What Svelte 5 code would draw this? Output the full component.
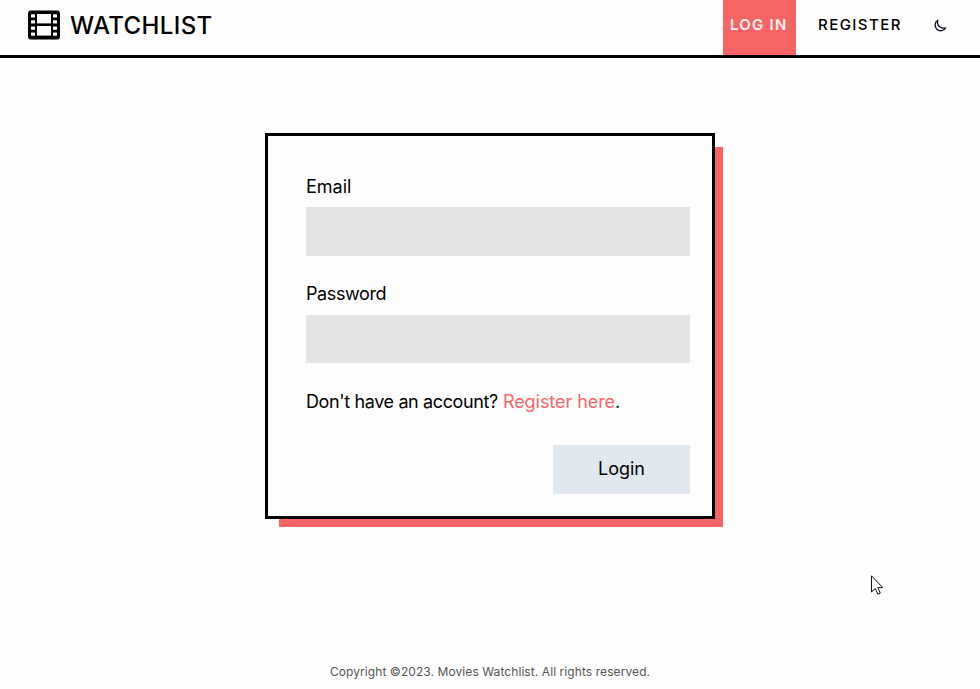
<script>
  let email = $state('');
  let password = $state('');
</script>

<div class="page">
  <header>
    <a class="brand" href="#home">
      <svg width="32" height="30" viewBox="0 0 32 30" aria-hidden="true">
        <rect x="0" y="0.6" width="32" height="28.8" rx="3" fill="#000" />
        <g fill="#fefefe">
          <rect x="9" y="4" width="14" height="9.4" />
          <rect x="9" y="16" width="14" height="9.6" />
          {#each [4.2, 10.2, 16.4, 22.4] as y}
            <rect x="3" {y} width="4" height="3.4" rx="0.5" />
            <rect x="25" {y} width="4" height="3.4" rx="0.5" />
          {/each}
        </g>
      </svg>
      <span>WATCHLIST</span>
    </a>
    <nav>
      <a class="link active" href="#login"><span>LOG IN</span></a>
      <a class="link register" href="#register"><span>REGISTER</span></a>
      <button class="theme" type="button" aria-label="Toggle theme">
        <svg width="14" height="14" viewBox="0 0 14 14" aria-hidden="true">
          <path d="M4.8 1.2A5.7 5.7 0 1 0 12.8 8.8A6.2 6.2 0 0 1 4.8 1.2Z" fill="none" stroke="#0b0b1c" stroke-width="1.3" stroke-linejoin="round" />
        </svg>
      </button>
    </nav>
  </header>

  <main>
    <form>
      <label for="email">Email</label>
      <input id="email" type="email" bind:value={email} />
      <label for="password" class="second">Password</label>
      <input id="password" type="password" bind:value={password} />
      <p><span class="ask">Don't have an account?</span> <a href="#register">Register here</a>.</p>
      <button class="submit" type="button">Login</button>
    </form>
  </main>

  <footer>Copyright ©2023. Movies Watchlist. All rights reserved.</footer>

  <svg class="cursor" width="14" height="21" viewBox="0 0 14 21" aria-hidden="true">
    <path d="M.5 .8V17L4.3 13.5L6.8 19.2L9.3 18.1L6.8 12.6H11.7Z" fill="#fff" stroke="#10101c" stroke-width="1" />
  </svg>
</div>

<style>
  :global(body) {
    margin: 0;
    background: #fefefe;
  }
  .page {
    position: relative;
    box-sizing: border-box;
    height: 689px;
    display: flex;
    flex-direction: column;
    overflow: hidden;
    background: #fefefe;
    color: #000;
    font-family: Inter, 'Liberation Sans', sans-serif;
    font-size: 18px;
  }
  a {
    color: inherit;
    text-decoration: none;
  }
  header {
    flex: none;
    display: flex;
    justify-content: space-between;
    height: 55px;
    padding: 0 28px;
    border-bottom: 3px solid #000;
  }
  .brand {
    display: flex;
    align-items: center;
    gap: 10px;
    height: 50px;
    font-size: 24px;
    font-weight: 500;
    letter-spacing: 0.38px;
  }
  nav {
    display: flex;
  }
  .link {
    box-sizing: border-box;
    height: 55px;
    font-size: 15px;
    font-weight: 500;
    line-height: 50px;
    letter-spacing: 1.45px;
    white-space: nowrap;
  }
  .active {
    width: 73px;
    padding-left: 7px;
    background: #f66565;
    color: #fff0f0;
    font-weight: 600;
    letter-spacing: 1.25px;
  }
  .register {
    width: 115px;
    padding-left: 22px;
  }
  button {
    border: 0;
    font: inherit;
    color: inherit;
  }
  .theme {
    width: 41px;
    height: 50px;
    padding: 2px 5px 0 22px;
    display: flex;
    align-items: center;
    background: none;
  }
  main {
    flex: 1;
    padding-top: 75px;
  }
  form {
    box-sizing: border-box;
    width: 450px;
    height: 386px;
    margin: 0 auto;
    padding: 36px 22px 22px 38px;
    display: flex;
    flex-direction: column;
    border: 3px solid #000;
    background: #fefefe;
    box-shadow: 11px 11px 0 -3px #f66565;
  }
  label {
    height: 35px;
    line-height: 30px;
  }
  .second {
    height: 36px;
    margin-top: 23px;
    letter-spacing: -0.4px;
  }
  input {
    box-sizing: border-box;
    width: 100%;
    height: 49px;
    padding: 0 12px;
    border: 0;
    border-radius: 0;
    outline: 0;
    background: #e4e4e4;
    font: inherit;
  }
  #password {
    height: 48px;
  }
  p {
    margin: 24px 0 0;
    height: 58px;
    line-height: 30px;
    white-space: nowrap;
  }
  .ask {
    letter-spacing: -0.38px;
  }
  p a {
    color: #f66565;
    letter-spacing: -0.06px;
  }
  .submit {
    align-self: flex-end;
    width: 137px;
    height: 49px;
    padding: 0 0 2px;
    background: #e1e8f0;
  }
  footer {
    flex: none;
    height: 26px;
    font-size: 12px;
    line-height: 18px;
    letter-spacing: 0.08px;
    text-align: center;
    color: #555;
  }
  .cursor {
    position: absolute;
    left: 871px;
    top: 575px;
  }
</style>
